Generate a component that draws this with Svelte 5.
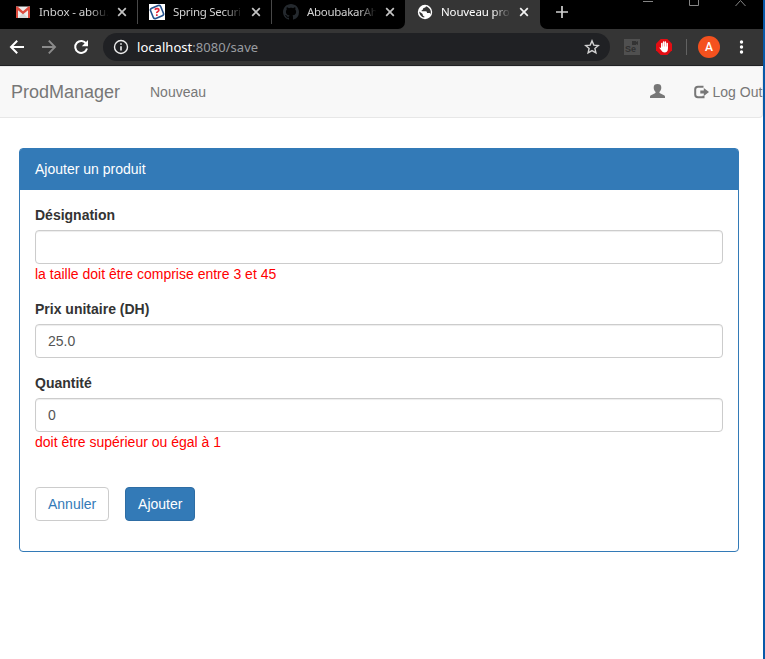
<script>
  const openTabs = [
    { icon: 'mail', title: 'Inbox - abou.', spacing: -0.1 },
    { icon: 'spring', title: 'Spring Securi', spacing: -0.28 },
    { icon: 'github', title: 'AboubakarAh', spacing: -0.3 }
  ];
  let designation = $state('');
  let price = $state('25.0');
  let quantity = $state('0');
</script>

{#snippet cross(color)}
  <svg class="cross" width="10" height="10" viewBox="0 0 10 10"><path d="M1.2 1.2 8.8 8.8M8.800 1.200 1.200 8.800" stroke={color} stroke-width="1.7" /></svg>
{/snippet}

<div class="window">
  <div class="screen">
    <header class="tabs">
      <div class="inactive">
        {#each openTabs as tab, i}
          <div class="tab" class:last={i === 2}>
            {#if tab.icon === 'mail'}
              <svg width="16" height="16" viewBox="0 0 16 16"><path d="M1 2.500h14v11.500H1z" fill="#ececec" /><path d="M3 14 8 9l5 5z" fill="#d5d5d5" /><path d="M1 14V2.500h1.500L8 7.300l5.500-4.800H15V14h-2V6.300L8 10.300 3 6.300V14z" fill="#dc4b3e" /></svg>
            {:else if tab.icon === 'spring'}
              <svg width="16" height="16" viewBox="0 0 16 16"><path d="M0 0h16v16H0z" fill="#fff" /><rect x="2.500" y="2.500" width="11" height="11" rx="2" transform="rotate(-22 8 8)" fill="#fff" stroke="#23508c" stroke-width="1.600" /><path d="M5.700 5.600c2-1.700 4.300-.9 4.200.6-.1 1.400-2.400 1.100-2.200 3M7.800 10.300v1.800" fill="none" stroke="#e3293c" stroke-width="1.700" /></svg>
            {:else}
              <svg width="16" height="16" viewBox="0 0 16 16"><path fill="#24292e" d="M8 0C3.580 0 0 3.580 0 8c0 3.540 2.290 6.530 5.470 7.590.4.070.55-.17.55-.38 0-.19-.01-.82-.01-1.490-2.010.37-2.530-.49-2.690-.94-.09-.23-.48-.94-.82-1.130-.28-.15-.68-.52-.01-.53.63-.01 1.080.58 1.230.82.72 1.210 1.870.87 2.330.66.070-.52.280-.87.510-1.070-1.780-.2-3.640-.89-3.640-3.950 0-.87.310-1.590.82-2.150-.08-.2-.36-1.020.080-2.120 0 0 .67-.21 2.200.82.640-.18 1.320-.27 2-.27s1.360.090 2 .27c1.530-1.040 2.200-.82 2.200-.82.440 1.100.160 1.920.080 2.120.510.560.820 1.270.820 2.150 0 3.070-1.870 3.750-3.650 3.950.290.250.540.730.540 1.480 0 1.070-.01 1.930-.01 2.200 0 .210.150.460.550.380A8.010 8.010 0 0 0 16 8c0-4.420-3.580-8-8-8" /></svg>
            {/if}
            <span class="title" style:letter-spacing="{tab.spacing}px">{tab.title}</span>
            {@render cross('#c4c4c4')}
          </div>
        {/each}
      </div>
      <div class="tab active">
        <svg width="16" height="16" viewBox="0 0 16 16"><circle cx="8" cy="8" r="7.200" fill="#fff" /><path d="M9 2.300c-.2 1.300-1.200 1.500-2.300 1.700-.8.200-.4 1.500-1.300 1.900-.8.400-1.200.7-.4 1.400h3.700c1.200 0 1.300 1 1.300 1.700h2.200c.8 0 1.300.7 1.300 1.400 1-2.700.2-6.200-4.500-8.100zM2.300 7.500c0 3.200 2.100 5.600 5 6.100v-1.300c-.9 0-1.600-.6-1.600-1.500v-.8z" fill="#353535" /></svg>
        <span class="title" style:letter-spacing="-0.15px">Nouveau pro</span>
        {@render cross('#f4f4f4')}
      </div>
      <div class="rest">
        <svg class="plus" width="12" height="12" viewBox="0 0 12 12"><path d="M6 0v12M0 6h12" stroke="#d0d0d0" stroke-width="1.700" /></svg>
        <svg class="controls" width="104" height="7" viewBox="0 0 104 7"><path d="M0 1.500h10M46.500 0v5.500h9V0M92.500 6l5-5.500 5 5.500" fill="none" stroke="#858585" stroke-width="1" /></svg>
      </div>
    </header>

    <div class="toolbar">
      <svg class="back" width="16" height="16" viewBox="0 0 16 16"><path d="M15 8H2M8.200 1.700 2 8l6.200 6.300" fill="none" stroke="#fff" stroke-width="2" /></svg>
      <svg class="forward" width="16" height="16" viewBox="0 0 16 16"><path d="M1 8h13M7.800 1.700 14 8l-6.200 6.300" fill="none" stroke="#8b8b8b" stroke-width="1.900" /></svg>
      <svg class="reload" width="16" height="16" viewBox="0 0 16 16"><path d="M13.300 4.700A6 6 0 1 0 14 9.500" fill="none" stroke="#fff" stroke-width="2" /><path d="M15 1v6.200H8.800z" fill="#fff" /></svg>
      <div class="address">
        <svg width="16" height="16" viewBox="0 0 16 16"><circle cx="8" cy="8" r="6.500" fill="none" stroke="#eee" stroke-width="1.400" /><path d="M8 7.200v4.300M8 4.200v1.600" stroke="#eee" stroke-width="1.600" /></svg>
        <span class="url"><b>localhost</b>:8080/save</span>
        <svg class="star" width="16" height="16" viewBox="0 0 16 16"><path d="m8 1.900 1.800 4.200 4.500.4-3.400 3 1 4.400L8 11.600l-3.900 2.300 1-4.400-3.400-3 4.500-.4z" fill="none" stroke="#d2d2d2" stroke-width="1.400" /></svg>
      </div>
      <div class="selenium">
        <svg width="6" height="4" viewBox="0 0 6 4"><path d="M0 0h4v1l2-1v4L4 3v1H0z" fill="#333" /></svg>
        <span>Se</span>
      </div>
      <svg class="blocker" width="16" height="16" viewBox="0 0 16 16"><path d="M4.700 0h6.600L16 4.700v6.600L11.300 16H4.700L0 11.300V4.700z" fill="#e40d13" /><path d="M5.800 9V4.500M7.600 8V3M9.400 8V3M11.200 9V4.400" stroke="#fff" stroke-width="1.500" stroke-linecap="round" /><path d="M5.100 7.500h6.800V10c0 2.200-1.300 3.600-3.200 3.600-1.700 0-2.500-.8-3.300-2L3.300 8.800c.3-.6 1-.3 1.800.3z" fill="#fff" /></svg>
      <i class="divider"></i>
      <span class="avatar">A</span>
      <svg class="more" width="5" height="14" viewBox="0 0 5 14"><circle cx="2.500" cy="2" r="1.700" fill="#fff" /><circle cx="2.500" cy="7" r="1.700" fill="#fff" /><circle cx="2.500" cy="12" r="1.700" fill="#fff" /></svg>
    </div>

    <nav class="navbar">
      <a class="brand" href="#home">ProdManager</a>
      <a class="new" href="#new">Nouveau</a>
      <svg class="user" width="15" height="14" viewBox="0 0 15 14"><path d="M7.500 0C5 0 3.700 1.200 3.700 3.400c0 2 .8 3.300 1.700 4.400.4.600.2 1.200-.4 1.500l-4 1.900c-.7.300-1 .8-1 1.500V14h15v-1.300c0-.7-.3-1.200-1-1.500l-4-1.900c-.6-.3-.8-.9-.4-1.500.9-1.100 1.700-2.400 1.700-4.400C11.300 1.200 10 0 7.500 0z" fill="#777" /></svg>
      <a class="logout" href="#logout">
        <svg width="15" height="14" viewBox="0 0 15 14"><path d="M9.500 1.800H4Q1.200 1.800 1.200 4.500v5Q1.200 12.300 4 12.300H9.500V10.800" fill="none" stroke="#777" stroke-width="2" /><path d="M6.300 5.500h3.500V3L15 7l-5.200 4V8.500H6.300z" fill="#777" /></svg>
        Log Out
      </a>
    </nav>

    <main class="panel">
      <div class="heading">Ajouter un produit</div>
      <form onsubmit={(e) => e.preventDefault()}>
        <div class="group">
          <label for="designation">Désignation</label>
          <input id="designation" bind:value={designation} />
          <span class="error">la taille doit être comprise entre 3 et 45</span>
        </div>
        <div class="group">
          <label for="price">Prix unitaire (DH)</label>
          <input id="price" bind:value={price} />
        </div>
        <div class="group">
          <label for="quantity">Quantité</label>
          <input id="quantity" bind:value={quantity} />
          <span class="error">doit être supérieur ou égal à 1</span>
        </div>
        <div class="actions">
          <button type="button" class="cancel">Annuler</button>
          <button type="submit" class="submit">Ajouter</button>
        </div>
      </form>
    </main>
  </div>
</div>

<style>
  * { box-sizing: border-box; }
  svg { display: block; flex: none; }
  .window { width: 765px; height: 659px; padding-right: 2px; background: #0859a8; overflow: hidden; font: 14px/20px "Liberation Sans", Arial, sans-serif; color: #333; }
  .screen { height: 659px; background: #fff; overflow: hidden; }

  .tabs { height: 29px; display: flex; background: #353535; font: 12px/16px "Noto Sans", "Segoe UI", sans-serif; }
  .inactive { width: 405px; padding-left: 4px; display: flex; background: #000; border-bottom-right-radius: 7px; }
  .tab { width: 134px; flex: none; height: 24px; padding: 0 10px 0 11px; display: flex; align-items: center; color: #d2d2d2; border-right: 1px solid #484848; }
  .tab.last { border-right-color: transparent; }
  .tab.active { width: 135px; padding-left: 12px; color: #fff; border-right-color: transparent; }
  .title { width: 69px; flex: none; margin-left: 8px; white-space: nowrap; font-size: 11.5px; mask-image: linear-gradient(to right, #000 74%, transparent 101%); }
  .cross { margin-left: 9px; }
  .rest { flex: 1; display: flex; background: #000; border-bottom-left-radius: 7px; }
  .plus { margin: 6px 0 0 16px; }
  .controls { margin-left: 75px; }

  .toolbar { height: 37px; display: flex; align-items: center; background: #353535; border-bottom: 1px solid #202124; }
  .back { margin-left: 9px; }
  .forward { margin-left: 16px; }
  .reload { margin-left: 16px; }
  .address { width: 507px; height: 28px; margin-left: 14px; padding: 0 10px; border-radius: 14px; background: #202124; display: flex; align-items: center; }
  .url { margin-left: 8px; color: #9a9da1; font: 13px/18px "Noto Sans", "Segoe UI", sans-serif; letter-spacing: .04px; }
  .url b { font-weight: 400; color: #fff; }
  .star { margin-left: auto; }
  .selenium { width: 16px; height: 16px; margin-left: 14px; background: #505050; display: flex; flex-direction: column; }
  .selenium svg { align-self: flex-end; margin: 2px 2px 0 0; }
  .selenium span { font: 700 9px/9px "Liberation Sans", sans-serif; color: #303030; padding-left: 1px; }
  .blocker { margin-left: 16px; }
  .divider { width: 1px; height: 16px; margin-left: 14px; background: #626262; }
  .avatar { width: 22px; height: 22px; margin-left: 11px; border-radius: 50%; background: #f4511e; color: #fff; font: 500 12px/22px Roboto, sans-serif; text-align: center; }
  .more { margin-left: 19px; }

  .navbar { height: 52px; display: flex; align-items: center; background: #f8f8f8; border: 1px solid #e7e7e7; border-left: 0; border-radius: 0 4px 4px 0; white-space: nowrap; }
  .navbar a { color: #777; text-decoration: none; }
  .navbar .brand { width: 109px; margin-left: 11px; font-size: 18px; }
  .new { margin-left: 30px; }
  .user { margin-left: auto; margin-top: -2px; }
  .logout { margin-left: 29px; width: 68px; display: flex; align-items: center; gap: 3.500px; }
  .logout svg { margin-top: -1px; }

  .panel { width: 720px; height: 404px; margin: 30px 0 0 19px; border: 1px solid #337ab7; border-radius: 4px; }
  .heading { height: 41px; padding: 10px 15px; color: #fff; background: #337ab7; border-radius: 2px 2px 0 0; }
  form { padding: 15px; }
  .group { margin-bottom: 15px; display: flex; flex-direction: column; }
  label { font-weight: 700; margin-bottom: 5px; }
  input { width: 100%; height: 34px; padding: 6px 12px; border: 1px solid #ccc; border-radius: 4px; outline: 0; color: #555; background: #fff; box-shadow: inset 0 1px 1px rgba(0, 0, 0, .075); font: inherit; }
  .error { color: red; }
  .actions { margin-top: 35px; display: flex; gap: 16px; }
  button { height: 34px; padding: 6px 12px; border: 1px solid #ccc; border-radius: 4px; font: inherit; background: #fff; color: #337ab7; }
  .submit { width: 70px; padding: 6px 11.500px; background: #337ab7; border-color: #2e6da4; color: #fff; }
</style>
